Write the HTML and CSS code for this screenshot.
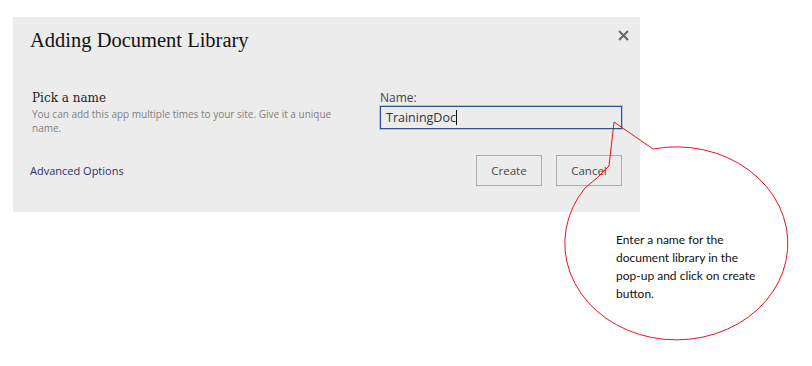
FILE: index.html
```html
<!DOCTYPE html>
<html>
<head>
<meta charset="utf-8">
<link rel="stylesheet" href="styles.css">
</head>
<body>
<div class="page">
  <div class="dialog">
    <div class="header">
      <h1 class="title">Adding Document Library</h1>
      <button class="close" aria-label="Close">
        <svg width="11" height="11" viewBox="0 0 11 11"><path d="M1 1 L10 10 M10 1 L1 10" stroke="#666" stroke-width="2"/></svg>
      </button>
    </div>
    <div class="body">
      <div class="left">
        <div class="pick">Pick a name</div>
        <div class="desc">You can add this app multiple times to your site. Give it a unique name.</div>
      </div>
      <div class="right">
        <label class="label">Name:</label>
        <div class="input"><span class="value">TrainingDoc</span><span class="caret"></span></div>
      </div>
    </div>
    <div class="footer">
      <a class="advanced">Advanced Options</a>
      <div class="buttons">
        <button class="btn">Create</button>
        <button class="btn">Cancel</button>
      </div>
    </div>
  </div>
  <svg class="callout" width="812" height="366" viewBox="0 0 812 366">
    <path d="M614,122 L653,149 A111.5 96.5 0 1 1 585,188 Q598,178 609,166 Z" fill="none" stroke="#e8141c" stroke-width="1"/>
  </svg>
  <div class="note">Enter a name for the<br>document library in the<br>pop-up and click on create<br>button.</div>
</div>
</body>
</html>
```
FILE: styles.css
```css
html, body {
  margin: 0;
  padding: 0;
  background: #fff;
}
.page {
  position: relative;
  width: 812px;
  height: 366px;
  overflow: hidden;
  padding: 17px 0 0 13px;
  box-sizing: border-box;
}
.dialog {
  width: 627px;
  height: 195px;
  background: #ececec;
  box-sizing: border-box;
  padding: 10px 18px 0 17px;
  display: flex;
  flex-direction: column;
}
.header {
  display: flex;
  justify-content: space-between;
  align-items: flex-start;
  height: 63px;
}
.title {
  margin: 0;
  font-family: "Liberation Serif", "Times New Roman", serif;
  font-weight: normal;
  font-size: 20.5px;
  line-height: 26px;
  color: #111;
}
.close {
  border: 0;
  background: none;
  padding: 0;
  margin: 3px -7px 0 0;
  width: 11px;
  height: 11px;
  display: flex;
}
.body {
  display: flex;
  justify-content: space-between;
}
.left {
  width: 315px;
  padding-left: 2px;
}
.pick {
  font-family: "DejaVu Serif", Georgia, serif;
  font-size: 12px;
  line-height: 16px;
  color: #222;
}
.desc {
  font-family: "Open Sans", sans-serif;
  font-size: 10px;
  line-height: 14px;
  color: #808080;
  margin-top: 1px;
}
.right {
  width: 242px;
  display: flex;
  flex-direction: column;
}
.label {
  font-family: "Open Sans", sans-serif;
  font-size: 12px;
  line-height: 16px;
  color: #444;
}
.input {
  height: 23px;
  box-sizing: border-box;
  border: 1px solid #2c4f8f;
  box-shadow: 0 0 0 1px #b0c8ea;
  background: #ececec;
  display: flex;
  align-items: center;
  padding-left: 5px;
  font-family: "Open Sans", sans-serif;
  font-size: 12.5px;
  color: #333;
}
.caret {
  width: 1px;
  height: 15px;
  background: #111;
}
.footer {
  display: flex;
  justify-content: space-between;
  align-items: center;
  margin-top: 20px;
}
.advanced {
  font-family: "Open Sans", sans-serif;
  font-size: 11px;
  color: #29306e;
}
.buttons {
  display: flex;
  gap: 14px;
}
.btn {
  width: 66px;
  height: 31px;
  border: 1px solid #ababab;
  background: #ececec;
  font-family: "Open Sans", sans-serif;
  font-size: 11.5px;
  color: #444;
  padding: 0;
}
.callout {
  position: absolute;
  left: 0;
  top: 0;
  pointer-events: none;
}
.note {
  position: absolute;
  left: 616px;
  top: 231px;
  width: 160px;
  font-family: Lato, sans-serif;
  font-size: 12px;
  line-height: 18px;
  color: #111;
}
```
